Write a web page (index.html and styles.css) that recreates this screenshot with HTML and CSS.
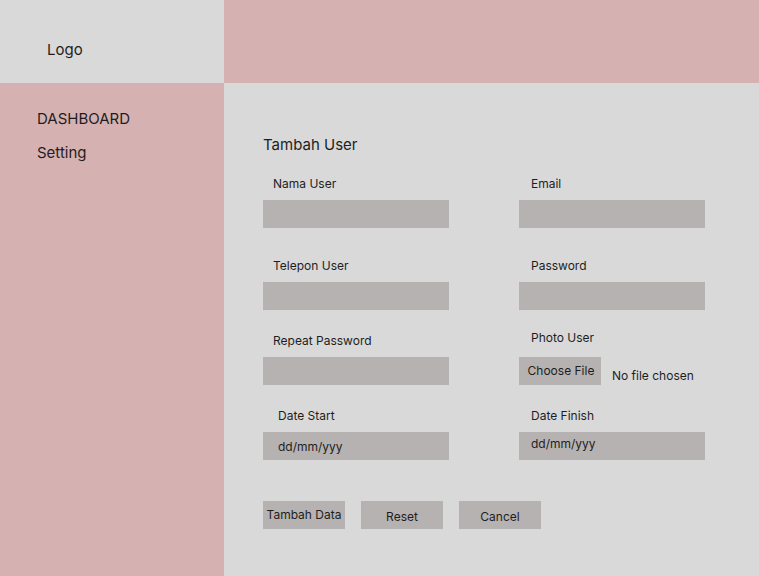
FILE: index.html
```html
<!DOCTYPE html>
<html>
<head>
<meta charset="utf-8">
<link rel="stylesheet" href="styles.css">
</head>
<body>
<div class="app">
  <div class="logo-box"><span class="logo">Logo</span></div>
  <div class="topbar"></div>
  <nav class="sidebar">
    <a class="nav-item">DASHBOARD</a>
    <a class="nav-item">Setting</a>
  </nav>
  <main class="main">
    <h1 class="title">Tambah User</h1>
    <div class="form">
      <div class="field r1">
        <label class="lbl">Nama User</label>
        <div class="input"></div>
      </div>
      <div class="field r1 right">
        <label class="lbl">Email</label>
        <div class="input"></div>
      </div>
      <div class="field r2">
        <label class="lbl">Telepon User</label>
        <div class="input"></div>
      </div>
      <div class="field r2 right">
        <label class="lbl">Password</label>
        <div class="input"></div>
      </div>
      <div class="field r3">
        <label class="lbl">Repeat Password</label>
        <div class="input"></div>
      </div>
      <div class="field r3 right photo">
        <label class="lbl">Photo User</label>
        <div class="file-row">
          <span class="file-btn">Choose File</span>
          <span class="file-txt">No file chosen</span>
        </div>
      </div>
      <div class="field r4 date-start">
        <label class="lbl">Date Start</label>
        <div class="input date">dd/mm/yyy</div>
      </div>
      <div class="field r4 right date-finish">
        <label class="lbl">Date Finish</label>
        <div class="input date">dd/mm/yyy</div>
      </div>
    </div>
    <div class="actions">
      <button class="btn btn-add">Tambah Data</button>
      <button class="btn">Reset</button>
      <button class="btn">Cancel</button>
    </div>
  </main>
</div>
</body>
</html>
```
FILE: styles.css
```css
* { box-sizing: border-box; }
html, body { margin: 0; padding: 0; }
body {
  font-family: Inter, "Liberation Sans", sans-serif;
  color: #1e1e1e;
  background: #d9d9d9;
}
.app {
  display: grid;
  grid-template-columns: 224px 1fr;
  grid-template-rows: 83px 493px;
  width: 759px;
  height: 576px;
}
.logo-box {
  background: #d9d9d9;
  padding: 41px 0 0 47px;
}
.logo { font-size: 15px; line-height: 18px; display: block; }
.topbar { background: #d6b1b1; }
.sidebar {
  background: #d6b1b1;
  padding: 27px 0 0 37px;
  display: flex;
  flex-direction: column;
  gap: 16px;
}
.nav-item { font-size: 15px; line-height: 18px; display: block; }
.main {
  background: #d9d9d9;
  padding: 53px 0 0 39px;
}
.title {
  font-size: 15px;
  line-height: 18px;
  font-weight: 400;
  margin: 0 0 22px 0;
}
.form {
  display: grid;
  grid-template-columns: 186px 186px;
  column-gap: 70px;
}
.field { display: flex; flex-direction: column; }
.lbl {
  font-size: 12px;
  line-height: 15px;
  padding-left: 10px;
  margin-bottom: 9px;
}
.right .lbl { padding-left: 12px; }
.r2 { margin-top: 30px; }
.r3 { margin-top: 22.5px; }
.r4 { margin-top: 22.5px; }
.r3 .lbl { margin-bottom: 9.5px; }
.photo { margin-top: 19.5px; }
.photo .lbl { margin-bottom: 12.5px; }
.date-start .lbl { padding-left: 15px; margin-bottom: 9.5px; }
.date-finish .lbl { margin-bottom: 9.5px; }
.input {
  height: 28px;
  background: #b6b2b1;
}
.input.date {
  font-size: 12px;
  line-height: 28px;
  padding-left: 15px;
}
.date-start .input.date { line-height: 29px; }
.date-finish .input.date { padding-left: 12px; line-height: 23px; }
.file-row { display: flex; align-items: flex-start; }
.file-btn {
  width: 82px;
  height: 28px;
  background: #b6b2b1;
  font-size: 12px;
  line-height: 28px;
  text-align: center;
  padding-left: 2px;
}
.file-txt {
  font-size: 12px;
  line-height: 15px;
  margin: 11px 0 0 11px;
}
.actions {
  display: flex;
  gap: 16px;
  margin-top: 41px;
}
.btn {
  width: 82px;
  height: 28px;
  border: 0;
  padding: 0;
  background: #b6b2b1;
  font-family: Inter, "Liberation Sans", sans-serif;
  font-size: 12px;
  color: #1e1e1e;
  line-height: 28px;
  padding-top: 2px;
}
.btn-add { padding-top: 0; }
```
